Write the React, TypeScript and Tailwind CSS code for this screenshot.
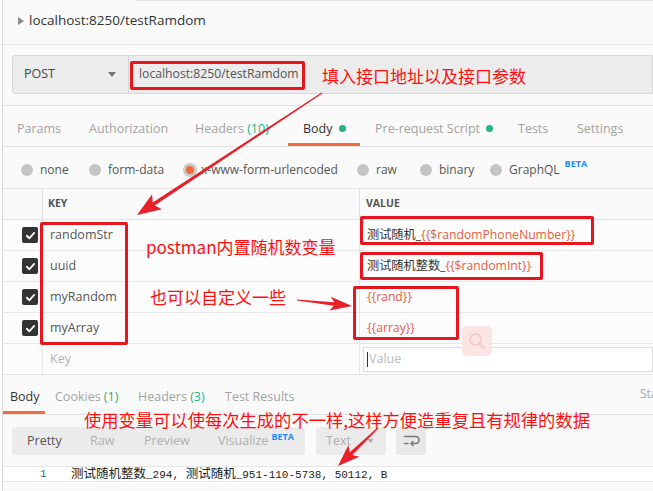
import React from "react";

function arrowPts(
  x1: number, y1: number, x2: number, y2: number,
  headLen: number, headHalf: number, w0: number, w1: number
) {
  const dx = x2 - x1, dy = y2 - y1;
  const L = Math.hypot(dx, dy);
  const ux = dx / L, uy = dy / L;
  const nx = -uy, ny = ux;
  const bx = x2 - ux * headLen, by = y2 - uy * headLen;
  const wx = bx - ux * 4, wy = by - uy * 4;
  const p = [
    [x1 + (nx * w0) / 2, y1 + (ny * w0) / 2],
    [bx + (nx * w1) / 2, by + (ny * w1) / 2],
    [wx + nx * headHalf, wy + ny * headHalf],
    [x2, y2],
    [wx - nx * headHalf, wy - ny * headHalf],
    [bx - (nx * w1) / 2, by - (ny * w1) / 2],
    [x1 - (nx * w0) / 2, y1 - (ny * w0) / 2],
  ];
  return p.map((q) => q.join(",")).join(" ");
}

function Check() {
  return (
    <div className="w-[16px] h-[16px] rounded-[2px] bg-[#333333] flex items-center justify-center">
      <svg width="11" height="11" viewBox="0 0 12 12">
        <path d="M2 6.3 L4.8 9 L10 3.2" fill="none" stroke="#ffffff" strokeWidth="2" strokeLinecap="round" strokeLinejoin="round" />
      </svg>
    </div>
  );
}

function Radio({ on }: { on?: boolean }) {
  if (on)
    return (
      <div className="w-[14px] h-[14px] rounded-full bg-[#c9c9c9] flex items-center justify-center shrink-0">
        <div className="w-[8px] h-[8px] rounded-full bg-[#f26b3a]" />
      </div>
    );
  return <div className="w-[12px] h-[12px] rounded-full bg-[#c4c4c4] shrink-0" />;
}

function Dot() {
  return <span className="inline-block w-[7px] h-[7px] rounded-full bg-[#26b47f] ml-[6px] mb-[1px]" />;
}

const rows = [
  { k: "randomStr", v: <><span className="text-[#333]">测试随机_</span><span className="text-[#e8603c]">{"{{$randomPhoneNumber}}"}</span></> },
  { k: "uuid", v: <><span className="text-[#333]">测试随机整数_</span><span className="text-[#e8603c]">{"{{$randomInt}}"}</span></> },
  { k: "myRandom", v: <span className="text-[#ec5a4c]">{"{{rand}}"}</span> },
  { k: "myArray", v: <span className="text-[#ec5a4c]">{"{{array}}"}</span> },
];

export default function App() {
  return (
    <div className="relative w-[653px] h-[491px] overflow-hidden bg-white font-['Open_Sans','Noto_Sans_CJK_SC',sans-serif]">
      <div className="ml-[2px] h-full border-l border-[#d9d9d9] bg-[#fafafa] flex flex-col">
        <div className="h-px ml-[132px] bg-[#e3e3e3]" />
        {/* title */}
        <div className="h-[44px] shrink-0 border-b border-[#e6e6e6] flex items-center pl-[15px] pb-[5px]">
          <svg width="6" height="8" viewBox="0 0 6 8" className="mr-[5px] mt-[2px]">
            <path d="M0 0 L6 4 L0 8 Z" fill="#8a8a8a" />
          </svg>
          <span className="text-[13.5px] text-[#333]">localhost:8250/testRamdom</span>
        </div>
        {/* request bar */}
        <div className="pt-[10px] pb-[11px] shrink-0">
          <div className="ml-[9px] flex h-[39px] border border-[#d8d8d8] bg-[#ececec] rounded-l-[3px]">
            <div className="w-[116px] shrink-0 border-r border-[#d8d8d8] flex items-center justify-between pl-[11px] pr-[12px]">
              <span className="text-[12.5px] text-[#444]">POST</span>
              <svg width="8" height="5" viewBox="0 0 8 5"><path d="M0 0 H8 L4 5 Z" fill="#777" /></svg>
            </div>
            <div className="flex items-center pl-[10px] text-[12.2px] text-[#555]">localhost:8250/testRamdom</div>
          </div>
        </div>
        {/* tabs */}
        <div className="h-[42px] shrink-0 border-t border-b border-[#e3e3e3] flex text-[12.5px] text-[#a3a3a3]">
          <div className="w-[86px] pl-[14px] pt-[9px] flex items-center border-b-[3px] border-transparent">Params</div>
          <div className="w-[106px] pt-[9px] flex items-center border-b-[3px] border-transparent">Authorization</div>
          <div className="w-[93px] pt-[9px] flex items-center border-b-[3px] border-transparent">Headers&nbsp;<span className="text-[#26b47f]">(10)</span></div>
          <div className="w-[72px] pl-[15px] pt-[9px] flex items-center border-b-[3px] border-[#f26b3a] text-[#333]">Body<Dot /></div>
          <div className="w-[158px] pl-[15px] pt-[9px] flex items-center border-b-[3px] border-transparent">Pre-request Script<Dot /></div>
          <div className="w-[59px] pt-[9px] flex items-center border-b-[3px] border-transparent">Tests</div>
          <div className="pt-[9px] flex items-center border-b-[3px] border-transparent">Settings</div>
        </div>
        {/* body type radios */}
        <div className="h-[42px] shrink-0 pt-[4px] border-b border-[#e3e3e3] flex items-center text-[12px] text-[#555]">
          <div className="w-[86px] pl-[18px] flex items-center gap-[7px]"><Radio />none</div>
          <div className="w-[94px] flex items-center gap-[7px]"><Radio />form-data</div>
          <div className="w-[174px] flex items-center gap-[4px]"><Radio on />x-www-form-urlencoded</div>
          <div className="w-[63px] flex items-center gap-[7px]"><Radio />raw</div>
          <div className="w-[70px] flex items-center gap-[7px]"><Radio />binary</div>
          <div className="flex items-center gap-[7px]"><Radio />GraphQL<span className="text-[9px] font-bold text-[#1a8cff] -mt-[12px] -ml-[2px]">BETA</span></div>
        </div>
        {/* table header */}
        <div className="h-[31px] shrink-0 border-b border-[#e3e3e3] grid grid-cols-[39px_317px_1fr] text-[10.5px] font-bold text-[#555]">
          <div />
          <div className="border-l border-[#e3e3e3] pl-[5px] flex items-center">KEY</div>
          <div className="border-l border-[#e3e3e3] pl-[6px] flex items-center">VALUE</div>
        </div>
        {rows.map((r) => (
          <div key={r.k} className="h-[31px] shrink-0 border-b border-[#e8e8e8] grid grid-cols-[39px_317px_1fr] text-[12.5px] bg-[#fcfcfc]">
            <div className="flex items-center pl-[19px]"><Check /></div>
            <div className="border-l border-[#e8e8e8] pl-[7px] flex items-center text-[#555]">{r.k}</div>
            <div className="border-l border-[#e8e8e8] pl-[7px] flex items-center text-[12.2px]">{r.v}</div>
          </div>
        ))}
        <div className="h-[31px] shrink-0 border-b border-[#e3e3e3] grid grid-cols-[39px_317px_1fr] text-[12.5px] bg-[#fcfcfc]">
          <div />
          <div className="border-l border-[#e8e8e8] pl-[7px] flex items-center text-[#b5b5b5]">Key</div>
          <div className="border-l border-[#e8e8e8] pl-[3px] flex items-center">
            <div className="h-[25px] w-full border border-[#dcdcdc] bg-white flex items-center pl-[3px] text-[#bbb]">
              <span className="w-px h-[15px] bg-[#333] mr-[1px]" />Value
            </div>
          </div>
        </div>
        {/* response */}
        <div className="h-[40px] shrink-0 border-b border-[#e3e3e3] flex text-[12.5px] text-[#a3a3a3] relative">
          <div className="w-[42px] pl-[7px] pt-[8px] flex items-center border-b-[3px] border-[#f26b3a] text-[#333]">Body</div>
          <div className="w-[83px] pl-[10px] pt-[8px] flex items-center border-b-[3px] border-transparent">Cookies&nbsp;<span className="text-[#26b47f]">(1)</span></div>
          <div className="w-[87px] pl-[10px] pt-[8px] flex items-center border-b-[3px] border-transparent">Headers&nbsp;<span className="text-[#26b47f]">(3)</span></div>
          <div className="pl-[10px] pt-[8px] flex items-center border-b-[3px] border-transparent">Test Results</div>
          <div className="ml-auto pt-[8px] flex items-center pb-[9px] whitespace-nowrap w-[13px] overflow-hidden text-[12px]">Sta</div>
        </div>
        <div className="mt-[12px] h-[28px] shrink-0 flex text-[12.5px]">
          <div className="ml-[9px] w-[293px] rounded-[3px] bg-[#ebebeb] flex items-center pl-[15px] text-[#b0b0b0]">
            <div className="w-[63px] text-[#555]">Pretty</div>
            <div className="w-[54px]">Raw</div>
            <div className="w-[74px]">Preview</div>
            <div className="flex items-start">Visualize<span className="text-[9px] leading-[10px] font-bold text-[#1a8cff] ml-[3px]">BETA</span></div>
          </div>
          <div className="ml-[11px] w-[70px] rounded-[3px] bg-[#ebebeb] flex items-center justify-between pl-[10px] pr-[12px] text-[#b0b0b0]">
            <span>Text</span>
            <svg width="7" height="4" viewBox="0 0 8 5"><path d="M0 0 H8 L4 5 Z" fill="#aaa" /></svg>
          </div>
          <div className="ml-[10px] w-[30px] rounded-[3px] bg-[#e8e8e8] flex items-center justify-center">
            <svg width="17" height="16" viewBox="0 0 17 16" fill="none" stroke="#7a7a7a" strokeWidth="1.6" strokeLinecap="round" strokeLinejoin="round">
              <path d="M1.5 3.5 H12.5 A3.5 3.5 0 0 1 12.5 10.5 H8" />
              <path d="M10 8.5 L8 10.5 L10 12.5" />
              <path d="M1.5 10.5 H5" />
            </svg>
          </div>
        </div>
        <div className="mt-[11px] h-[16px] shrink-0 border-t border-b border-[#e6e6e6] bg-white flex items-center font-['Liberation_Mono','Noto_Sans_CJK_SC',monospace] text-[11px] text-[#222]">
          <span className="w-[68px] pl-[37px] text-[#4a5a70]">1</span>
          <span className="whitespace-nowrap">
            <span className="text-[12.5px] font-['Noto_Sans_CJK_SC',sans-serif]">测试随机整数</span>_294, <span className="text-[12.5px] font-['Noto_Sans_CJK_SC',sans-serif]">测试随机</span>_951-110-5738, 50112, B
          </span>
        </div>
      </div>

      {/* overlays: annotations */}
      <div className="absolute left-[130px] top-[61px] w-[175px] h-[29px] border-[3px] border-[#e6161f] rounded-[2px]" />
      <div className="absolute left-[40px] top-[222px] w-[88px] h-[123px] border-[3px] border-[#e6161f] rounded-[2px]" />
      <div className="absolute left-[360px] top-[216px] w-[234px] h-[29px] border-[3px] border-[#e6161f] rounded-[2px]" />
      <div className="absolute left-[360px] top-[252px] w-[183px] h-[28px] border-[3px] border-[#e6161f] rounded-[2px]" />
      <div className="absolute left-[353px] top-[286px] w-[106px] h-[54px] border-[3px] border-[#e6161f] rounded-[2px]" />

      <div className="absolute left-[462px] top-[326px] w-[30px] h-[30px] rounded-[5px] bg-[#fbe4e4] flex items-center justify-center">
        <svg width="18" height="18" viewBox="0 0 18 18" fill="none" stroke="#f4caca" strokeWidth="2">
          <circle cx="7.5" cy="7.5" r="5.5" />
          <path d="M11.5 11.5 L16 16" strokeLinecap="round" />
        </svg>
      </div>

      <div className="absolute left-[322px] top-[65px] text-[17px] leading-[22px] text-[#ff1010] font-['Noto_Sans_CJK_SC',sans-serif] whitespace-nowrap">填入接口地址以及接口参数</div>
      <div className="absolute left-[146px] top-[236px] text-[17px] leading-[22px] text-[#ff1010] font-['Noto_Sans_CJK_SC',sans-serif] whitespace-nowrap">postman内置随机数变量</div>
      <div className="absolute left-[150px] top-[286px] text-[17px] leading-[22px] text-[#ff1010] font-['Noto_Sans_CJK_SC',sans-serif] whitespace-nowrap">也可以自定义一些</div>
      <div className="absolute left-[84px] top-[409px] text-[17.3px] leading-[22px] text-[#ff1010] font-['Noto_Sans_CJK_SC',sans-serif] whitespace-nowrap">使用变量可以使每次生成的不一样,这样方便造重复且有规律的数据</div>

      <svg className="absolute inset-0 pointer-events-none" width="653" height="491" viewBox="0 0 653 491">
        <polygon points={arrowPts(322, 93, 137, 215, 20, 9, 1.2, 3.6)} fill="#e8202a" />
        <polygon points={arrowPts(297, 300, 352, 306, 18, 7, 1.2, 3.4)} fill="#e8202a" />
        <polygon points={arrowPts(378, 428, 338, 466, 18, 8, 1.2, 3.6)} fill="#e8202a" />
      </svg>
    </div>
  );
}
